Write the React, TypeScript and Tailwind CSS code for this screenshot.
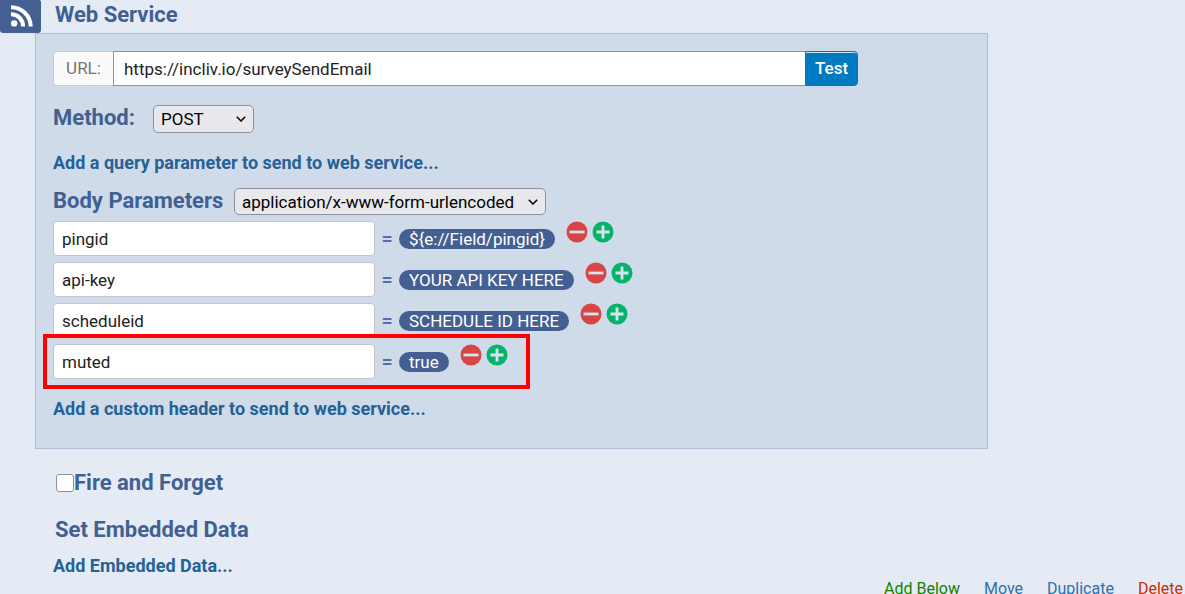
import React, { useState } from 'react';

type Param = {
    key: string;
    value: string;
    highlighted?: boolean;
};

const initialParams: Param[] = [
    { key: "pingid", value: "${e://Field/pingid}" },
    { key: "api-key", value: "YOUR API KEY HERE" },
    { key: "scheduleid", value: "SCHEDULE ID HERE" },
    { key: "muted", value: "true", highlighted: true },
];

const FeedIcon: React.FC = () => (
    <svg viewBox="0 0 41 33" className="w-[41px] h-[33px] shrink-0" aria-hidden="true">
        <path d="M0 0h39a2 2 0 0 1 2 2v28a3 3 0 0 1-3 3H3a3 3 0 0 1-3-3z" fill="#446093" />
        <g fill="none" stroke="#fff" strokeWidth="4">
            <path d="M11 14.2A11.8 11.8 0 0 1 23 26.5" />
            <path d="M11 7.2A19.6 19.6 0 0 1 30.7 26.5" />
        </g>
        <circle cx="14.2" cy="23.4" r="3.2" fill="#fff" />
    </svg>
);

const RoundButton: React.FC<{ label: string; add?: boolean; onClick: () => void; }> = ({ label, add, onClick }) => (
    <button type="button" aria-label={label} onClick={onClick} className="cursor-pointer">
        <svg viewBox="0 0 22 22" className="size-[22px]">
            <circle cx="11" cy="11" r="10.5" fill={add ? "#07b36b" : "#d84545"} />
            <path d={add ? "M4.5 11h13M11 4.5v13" : "M3.5 11h15"} stroke="#d9e3ee" strokeWidth="2.8" />
        </svg>
    </button>
);

const Dropdown: React.FC<{ id: string; options: string[]; className: string; }> = ({ id, options, className }) => (
    <div className="relative">
        <select id={id} className={`block appearance-none rounded-[5px] border border-[#8f8f9d] bg-[#e9e9ed] pl-[7px] text-[17px] leading-6 text-black ${className}`}>
            {options.map(o => <option key={o}>{o}</option>)}
        </select>
        <svg viewBox="0 0 10 6" className="pointer-events-none absolute right-2 top-1/2 w-[10px] h-[6px] -translate-y-1/2" aria-hidden="true">
            <path d="M.8.8 5 5 9.2.8" fill="none" stroke="#000" strokeWidth="1.5" />
        </svg>
    </div>
);

const ParamRow: React.FC<{ param: Param; onChange: (key: string) => void; onAdd: () => void; onRemove: () => void; }> = ({ param, onChange, onAdd, onRemove }) => (
    <div className="relative flex w-fit items-center">
        <input aria-label="Parameter name" value={param.key} onChange={e => onChange(e.target.value)} className="h-[35px] w-[322px] rounded border border-[#c3c5c9] bg-white px-2 text-[17px] text-[#222]" />
        <span className="w-6 text-center text-[20px] leading-5 font-medium text-[#5370a5]">=</span>
        <button type="button" className="h-5 rounded-full bg-[#446093] px-2.5 text-[17px] leading-5 text-white">{param.value}</button>
        <div className="mb-[13px] ml-[11px] flex gap-1">
            <RoundButton label="Remove parameter" onClick={onRemove} />
            <RoundButton label="Add parameter" add onClick={onAdd} />
        </div>
        {param.highlighted && <div className="pointer-events-none absolute -left-2.5 -right-[22px] -top-2.5 -bottom-2.5 border-4 border-[#fe0000]" />}
    </div>
);

const App: React.FC = () => {
    const [params, setParams] = useState(initialParams);
    const [url, setUrl] = useState("https://incliv.io/surveySendEmail");

    const rename = (i: number, key: string) => setParams(params.map((p, n) => n === i ? { ...p, key } : p));
    const remove = (i: number) => setParams(params.filter((_, n) => n !== i));
    const add = (i: number) => setParams([...params.slice(0, i + 1), { key: "", value: "Set a Value Now" }, ...params.slice(i + 1)]);

    return (
        <div className="h-screen overflow-hidden bg-[#e5ebf5] font-['Roboto',sans-serif] text-[#416092]">
            <header className="flex">
                <FeedIcon />
                <h1 className="ml-[14px] text-[22px] leading-[30px] font-bold">Web Service</h1>
            </header>

            <section className="ml-[35px] mr-[197px] flex flex-col items-start border border-[#aebdd4] bg-[#d0dbea] px-[17px] pt-[17px] pb-[27px]">
                <div className="flex w-full max-w-[805px] h-[35px] text-[17px]">
                    <label htmlFor="url" className="flex w-[60px] items-center justify-center rounded-l border border-r-0 border-[#c8ccd2] bg-[#fafafa] text-[#757575]">URL:</label>
                    <input id="url" value={url} onChange={e => setUrl(e.target.value)} className="min-w-0 flex-1 border border-r-0 border-[#8d9095] bg-white px-2.5 pt-[2px] text-[#222]" />
                    <button type="button" className="w-[53px] rounded-r border border-[#007ac0] bg-[#007ac0] font-medium text-white shadow-[inset_0_1px_0_#cfe3f2]">Test</button>
                </div>

                <div className="mt-[19px] flex items-center">
                    <label htmlFor="method" className="w-[100px] pb-[2px] text-[22px] leading-6 font-bold">Method:</label>
                    <Dropdown id="method" options={["POST", "GET", "PUT", "DELETE"]} className="h-7 w-[101px]" />
                </div>

                <a href="#query" className="mt-[18px] text-[18px] leading-6 font-bold text-[#256195]">Add a query parameter to send to web service...</a>

                <div className="mt-[13px] flex items-center">
                    <label htmlFor="content-type" className="w-[181px] pb-[2px] text-[22px] leading-6 font-bold">Body Parameters</label>
                    <Dropdown id="content-type" options={["application/x-www-form-urlencoded", "application/json"]} className="h-[27px] w-[312px]" />
                </div>

                <div className="mt-[6px] flex flex-col gap-[6px]">
                    {params.map((p, i) => <ParamRow key={i} param={p} onChange={k => rename(i, k)} onAdd={() => add(i)} onRemove={() => remove(i)} />)}
                </div>

                <a href="#header" className="mt-[18px] text-[18px] leading-6 font-bold text-[#256195]">Add a custom header to send to web service...</a>
            </section>

            <div className="ml-14 mt-5 flex items-center">
                <input id="fire" type="checkbox" className="size-[18px] appearance-none rounded-[3px] border border-[#8f8f9d] bg-white checked:bg-[#007ac0]" />
                <label htmlFor="fire" className="text-[22px] leading-7 font-bold">Fire and Forget</label>
            </div>

            <h2 className="ml-[55px] mt-[19px] text-[22px] leading-7 font-bold">Set Embedded Data</h2>
            <a href="#embedded" className="ml-[53px] mt-[10px] block w-fit text-[18px] leading-6 font-bold text-[#256195]">Add Embedded Data...</a>

            <footer className="flex justify-end gap-6 pt-px pr-[2px] text-[16px] leading-5 text-[#2f70a8]">
                <a href="#add" className="text-[#128000]">Add Below</a>
                <a href="#move">Move</a>
                <a href="#duplicate">Duplicate</a>
                <a href="#delete" className="text-[#cf2a00]">Delete</a>
            </footer>
        </div>
    );
};

export default App;
